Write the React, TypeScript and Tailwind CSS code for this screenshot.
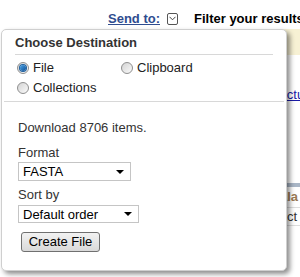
import { useState } from "react";

const Radio = ({ checked, label, onClick }: { checked: boolean; label: string; onClick: () => void }) => (
  <label className="flex items-center gap-[4px] cursor-pointer" onClick={onClick}>
    <span className="flex h-[12px] w-[12px] items-center justify-center rounded-full border border-[#8f8f8f] bg-gradient-to-br from-[#d4d4d4] to-[#fafafa]">
      {checked && <span className="h-[6px] w-[6px] rounded-full bg-gradient-to-br from-[#4aa3e6] to-[#0b4f96] ring-1 ring-[#1d5f9e]" />}
    </span>
    <span>{label}</span>
  </label>
);

const Select = ({ value, width, height }: { value: string; width: string; height: string }) => (
  <div className={`flex items-center justify-between border border-[#c5c5c5] bg-white pl-[4px] pr-[6px] text-black ${width} ${height}`}>
    <span>{value}</span>
    <span className="h-0 w-0 border-x-[4px] border-t-[4px] border-x-transparent border-t-black" />
  </div>
);

export default function App() {
  const [dest, setDest] = useState<"file" | "clipboard" | "collections">("file");

  return (
    <div className="relative h-[277px] w-[300px] overflow-hidden bg-white font-['Liberation_Sans',Arial,sans-serif] text-[13px] leading-[15px]">
      {/* Toolbar */}
      <div className="flex items-center whitespace-nowrap pl-[108px] pt-[11px]">
        <a className="font-bold text-[#2f4d8f] underline">Send to:</a>
        <span className="ml-[7px] flex h-[12px] w-[11px] shrink-0 items-center justify-center rounded-[2px] border border-[#555]">
          <svg width="7" height="5" viewBox="0 0 7 5"><path d="M0.5 0.8 L3.5 3.8 L6.5 0.8" fill="none" stroke="#444" strokeWidth="1" /></svg>
        </span>
        <span className="ml-[16px] font-bold text-black">Filter your results</span>
      </div>

      {/* Page content behind the popup */}
      <div className="mt-[3px] flex flex-col whitespace-nowrap">
        <div className="ml-[280px] h-[26px] bg-[#f7f1d4]" />
        <div className="ml-[263px] mt-[32px] text-[#1a1aa6] underline">Structure</div>
        <div className="ml-[280px] mt-[81px] h-[4px] bg-[#a9b6c6]" />
        <div className="ml-[264px] h-[20px] font-bold leading-[20px] text-[#9a7a55]">Scala</div>
        <div className="ml-[280px] h-[18px] border-t border-[#ddd] text-[#333]">
          <span className="-ml-[19px] leading-[18px]">Select</span>
        </div>
        <div className="ml-[280px] border-t border-[#ddd]" />
      </div>

      {/* Popup */}
      <div className="absolute left-[1px] top-[29px] h-[242px] w-[286px] rounded-[5px] border border-[#cfcfcf] bg-white text-[#333] shadow-[3px_3px_5px_rgba(0,0,0,0.45)]">
        <div className="px-[13px] pt-[5px]">
          <div className="border-b border-[#d8d8d8] pb-[4px] font-bold text-[#333]">Choose Destination</div>
          <div className="grid grid-cols-[104px_1fr] gap-y-[5px] pl-[2px] pt-[5px] text-[#222]">
            <Radio checked={dest === "file"} label="File" onClick={() => setDest("file")} />
            <Radio checked={dest === "clipboard"} label="Clipboard" onClick={() => setDest("clipboard")} />
            <Radio checked={dest === "collections"} label="Collections" onClick={() => setDest("collections")} />
          </div>
        </div>
        <div className="mx-[2px] mt-[6px] border-t border-[#d8d8d8]" />
        <div className="flex flex-col items-start px-[16px] pt-[18px]">
          <div>Download 8706 items.</div>
          <div className="mt-[10px]">Format</div>
          <div className="mt-[2px]">
            <Select value="FASTA" width="w-[113px]" height="h-[19px]" />
          </div>
          <div className="mt-[6px]">Sort by</div>
          <div className="mt-[3px]">
            <Select value="Default order" width="w-[121px]" height="h-[18px]" />
          </div>
          <button className="ml-[3px] mt-[9px] h-[20px] w-[79px] rounded-[3px] border border-[#707070] bg-gradient-to-b from-[#f2f2f2] to-[#d9d9d9] leading-[16px] text-black">
            Create File
          </button>
        </div>
      </div>
    </div>
  );
}
